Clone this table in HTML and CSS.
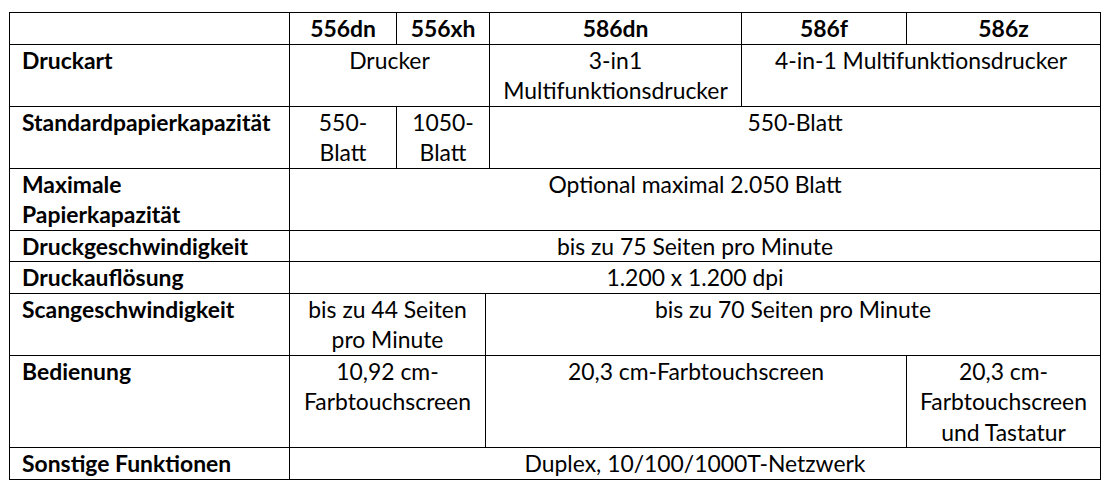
FILE: index.html
```html
<!DOCTYPE html>
<html lang="de">
<head>
<meta charset="utf-8">
<title>Druckervergleich</title>
<link rel="stylesheet" href="styles.css">
</head>
<body>
<table class="spec">
  <colgroup>
    <col class="c-label">
    <col class="c-556dn">
    <col class="c-556xh">
    <col class="c-gap">
    <col class="c-586dn">
    <col class="c-586f">
    <col class="c-586z">
  </colgroup>
  <thead>
    <tr>
      <th class="label"></th>
      <th>556dn</th>
      <th colspan="2">556xh</th>
      <th>586dn</th>
      <th>586f</th>
      <th>586z</th>
    </tr>
  </thead>
  <tbody>
    <tr>
      <th class="label">Druckart</th>
      <td colspan="3">Drucker</td>
      <td>3-in1 Multifunktionsdrucker</td>
      <td colspan="2">4-in-1 Multifunktionsdrucker</td>
    </tr>
    <tr>
      <th class="label">Standardpapierkapazität</th>
      <td>550-Blatt</td>
      <td colspan="2">1050-Blatt</td>
      <td colspan="3">550-Blatt</td>
    </tr>
    <tr>
      <th class="label">Maximale Papierkapazität</th>
      <td colspan="6">Optional maximal 2.050 Blatt</td>
    </tr>
    <tr>
      <th class="label">Druckgeschwindigkeit</th>
      <td colspan="6">bis zu 75 Seiten pro Minute</td>
    </tr>
    <tr>
      <th class="label">Druckauflösung</th>
      <td colspan="6">1.200 x 1.200 dpi</td>
    </tr>
    <tr>
      <th class="label">Scangeschwindigkeit</th>
      <td colspan="2">bis zu 44 Seiten pro Minute</td>
      <td colspan="4">bis zu 70 Seiten pro Minute</td>
    </tr>
    <tr>
      <th class="label">Bedienung</th>
      <td colspan="2">10,92 cm-Farbtouchscreen</td>
      <td colspan="3">20,3 cm-Farbtouchscreen</td>
      <td>20,3 cm-Farbtouchscreen und Tastatur</td>
    </tr>
    <tr>
      <th class="label">Sonstige Funktionen</th>
      <td colspan="6">Duplex, 10/100/1000T-Netzwerk</td>
    </tr>
  </tbody>
</table>
</body>
</html>
```
FILE: styles.css
```css
html, body {
  background: #ffffff;
}

body {
  margin: 0;
  padding: 12px 0 0 9px;
  font-family: Lato, "Liberation Sans", sans-serif;
  font-size: 22.9px;
  line-height: 30.5px;
  color: #000000;
}

.spec {
  border-collapse: collapse;
  table-layout: fixed;
  width: 1091px;
}

.c-label { width: 280px; }
.c-556dn { width: 107px; }
.c-556xh { width: 89px; }
.c-gap   { width: 4px; }
.c-586dn { width: 252px; }
.c-586f  { width: 165px; }
.c-586z  { width: 194px; }

.spec th,
.spec td {
  border: 1px solid #000000;
  padding: 0 11px;
  vertical-align: top;
  text-align: center;
  font-weight: 400;
}

.spec thead th {
  font-weight: 700;
}

.spec th.label {
  text-align: left;
  font-weight: 700;
  padding-left: 12px;
}
```
